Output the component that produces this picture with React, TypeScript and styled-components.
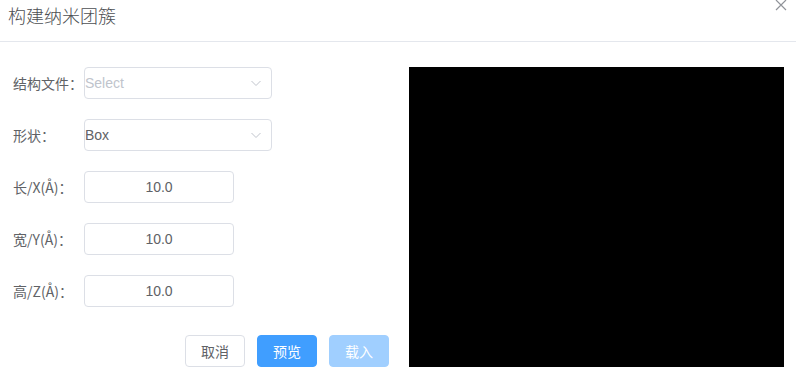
import React from 'react';
import styled, { createGlobalStyle } from 'styled-components';

const GlobalStyle = createGlobalStyle`
    html, body {
        margin: 0;
        padding: 0;
        background: #fff;
        overflow: hidden;
        font-family: "Liberation Sans", "Noto Sans CJK SC", sans-serif;
    }
`;

const Dialog = styled.div`
    width: 796px;
    height: 367px;
    position: relative;
    overflow: hidden;
    background: #fff;
`;

const Header = styled.div`
    height: 42px;
    box-sizing: border-box;
    padding: 3px 0 0 8px;
    border-bottom: 1px solid #e4e7ed;
`;

const Title = styled.span`
    font-size: 18px;
    line-height: 24px;
    color: #4d4f53;
    font-weight: 300;
    font-family: "Noto Sans CJK SC", sans-serif;
`;

const Close = styled.button`
    position: absolute;
    top: -2px;
    right: 8px;
    width: 14px;
    height: 14px;
    padding: 0;
    border: none;
    background: none;
    color: #909399;
    display: flex;
    align-items: center;
    justify-content: center;
`;

const Body = styled.div`
    display: flex;
    padding: 25px 0 0 13px;
    gap: 20px;
`;

const Form = styled.div`
    width: 376px;
    display: flex;
    flex-direction: column;
    gap: 20px;
`;

const Row = styled.div`
    display: flex;
    align-items: center;
    height: 32px;
`;

const Label = styled.label`
    width: 71px;
    flex-shrink: 0;
    font-size: 14px;
    color: #606266;
    font-family: "Noto Sans CJK SC", "Liberation Sans", sans-serif;
`;

const Field = styled.div<{ $width: number }>`
    width: ${({ $width }) => $width}px;
    height: 32px;
    box-sizing: border-box;
    border: 1px solid #dcdfe6;
    border-radius: 4px;
    display: flex;
    align-items: center;
    font-size: 14px;
    color: #606266;
`;

const SelectText = styled.span<{ $placeholder?: boolean }>`
    flex: 1;
    color: ${({ $placeholder }) => ($placeholder ? '#c0c4cc' : '#606266')};
`;

const Chevron = styled.span`
    width: 30px;
    display: flex;
    justify-content: center;
    color: #c0c4cc;
`;

const NumberText = styled.span`
    flex: 1;
    text-align: center;
`;

const Footer = styled.div`
    display: flex;
    justify-content: flex-end;
    gap: 12px;
    margin-top: 8px;
`;

const Button = styled.button<{ $variant?: 'default' | 'primary' | 'disabled' }>`
    width: 60px;
    height: 32px;
    border-radius: 4px;
    font-size: 14px;
    font-family: "Noto Sans CJK SC", "Liberation Sans", sans-serif;
    padding: 0;
    border: 1px solid
        ${({ $variant }) =>
            $variant === 'primary' ? '#409eff' : $variant === 'disabled' ? '#a0cfff' : '#dcdfe6'};
    background: ${({ $variant }) =>
        $variant === 'primary' ? '#409eff' : $variant === 'disabled' ? '#a0cfff' : '#fff'};
    color: ${({ $variant }) => ($variant === 'default' || !$variant ? '#606266' : '#fff')};
`;

const Canvas = styled.div`
    width: 375px;
    height: 300px;
    background: #000;
`;

const ChevronIcon = () => (
    <svg width="12" height="12" viewBox="0 0 12 12" fill="none" stroke="currentColor" strokeWidth="1">
        <path d="M1.5 4 L6 8.5 L10.5 4" />
    </svg>
);

const App: React.FC = () => {
    return (
        <Dialog>
            <GlobalStyle />
            <Header>
                <Title>构建纳米团簇</Title>
            </Header>
            <Close aria-label="close">
                <svg width="12" height="12" viewBox="0 0 12 12" stroke="currentColor" strokeWidth="1.2">
                    <path d="M1 1 L11 11 M11 1 L1 11" />
                </svg>
            </Close>
            <Body>
                <Form>
                    <Row>
                        <Label>结构文件：</Label>
                        <Field $width={188}>
                            <SelectText $placeholder>Select</SelectText>
                            <Chevron><ChevronIcon /></Chevron>
                        </Field>
                    </Row>
                    <Row>
                        <Label>形状：</Label>
                        <Field $width={188}>
                            <SelectText>Box</SelectText>
                            <Chevron><ChevronIcon /></Chevron>
                        </Field>
                    </Row>
                    <Row>
                        <Label>长/X(Å)：</Label>
                        <Field $width={150}><NumberText>10.0</NumberText></Field>
                    </Row>
                    <Row>
                        <Label>宽/Y(Å)：</Label>
                        <Field $width={150}><NumberText>10.0</NumberText></Field>
                    </Row>
                    <Row>
                        <Label>高/Z(Å)：</Label>
                        <Field $width={150}><NumberText>10.0</NumberText></Field>
                    </Row>
                    <Footer>
                        <Button>取消</Button>
                        <Button $variant="primary">预览</Button>
                        <Button $variant="disabled">载入</Button>
                    </Footer>
                </Form>
                <Canvas />
            </Body>
        </Dialog>
    );
};

export default App;
